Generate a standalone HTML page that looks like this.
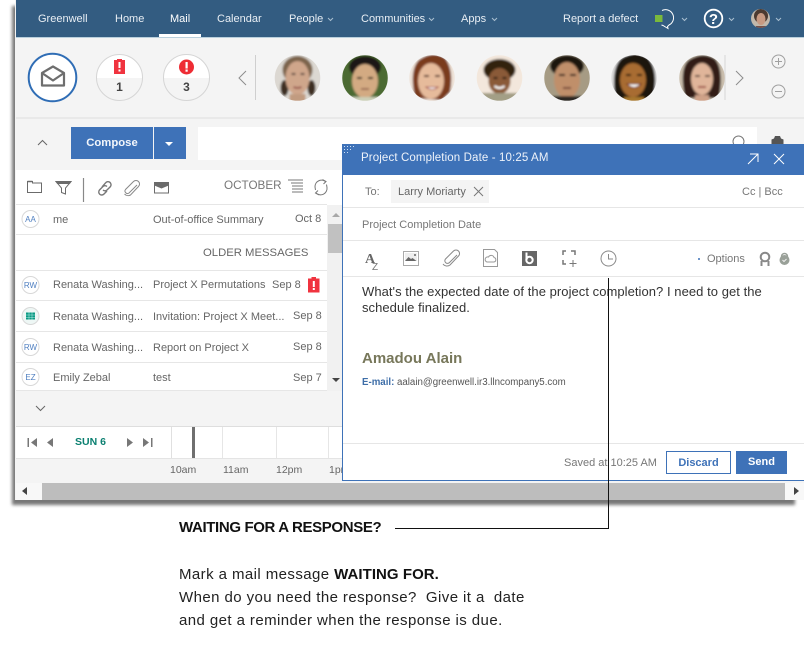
<!DOCTYPE html>
<html><head><meta charset="utf-8">
<style>
html,body{margin:0;padding:0;background:#fff;}
body{width:804px;height:666px;position:relative;overflow:hidden;font-family:"Liberation Sans",sans-serif;}
.a{position:absolute;white-space:nowrap;}
.n{color:#e8eef4;font-size:11px;top:12px;line-height:14px;}
.r{font-size:11px;color:#666;line-height:14px;}
.l{position:absolute;height:1px;background:#e6e6e6;}
svg{position:absolute;overflow:visible;}
.b{font-family:"Liberation Sans",sans-serif;font-size:15px;color:#222;line-height:20px;letter-spacing:.42px;}
.b b{letter-spacing:.05px;}
</style></head><body>

<!-- window shadow -->
<div class="a" style="left:12px;top:6px;width:783px;height:499px;background:#777;filter:blur(1.5px)"></div>
<div class="a" style="left:15px;top:0;width:789px;height:500px;background:#f4f4f4"></div>

<!-- nav -->
<div class="a" style="left:16px;top:0;width:788px;height:37px;background:#335c81"></div>
<div class="a" style="left:16px;top:37px;width:788px;height:1px;background:#b9cfdc"></div>
<div class="a" style="left:159px;top:34px;width:42px;height:3px;background:#fff"></div>
<span class="a n" style="left:38px">Greenwell</span>
<span class="a n" style="left:115px">Home</span>
<span class="a n" style="left:170px;color:#fff">Mail</span>
<span class="a n" style="left:217px">Calendar</span>
<span class="a n" style="left:289px">People</span>
<span class="a n" style="left:361px">Communities</span>
<span class="a n" style="left:461px">Apps</span>
<span class="a n" style="left:563px">Report a defect</span>
<svg style="left:0;top:0" width="804" height="40" fill="none" stroke="#a9bfd0" stroke-width="1">
<path d="M328 18l2.500 2.500 2.500-2.500M429 18l2.500 2.500 2.500-2.500M492 18l2.500 2.500 2.500-2.500M682 18l2.500 2.500 2.500-2.500M729 18l2.500 2.500 2.500-2.500M776 18l2.500 2.500 2.500-2.500"/>
</svg>
<svg style="left:654px;top:8px" width="24" height="22" fill="none">
<path d="M8 2.500a8 8 0 1 1 7 14.500l-1.500 1.500.5 2-2.500-1.500-2.500-1.500-1.500-.5" stroke="#fff" stroke-width="1"/>
<rect x="1" y="7" width="7.500" height="7" fill="#7ab93c"/>
</svg>
<svg style="left:703px;top:8px" width="22" height="22"><circle cx="10.500" cy="10.500" r="8.800" fill="none" stroke="#fff" stroke-width="1.800"/><text x="10.500" y="16" text-anchor="middle" font-family="Liberation Sans" font-weight="bold" font-size="15" fill="#fff">?</text></svg>
<svg style="left:751px;top:9px" width="20" height="20"><defs><clipPath id="c0"><circle cx="9.500" cy="9.500" r="9.500"/></clipPath></defs><g clip-path="url(#c0)"><rect width="20" height="20" fill="#c2b8ab"/><ellipse cx="10" cy="7" rx="7" ry="7" fill="#4c3a30"/><ellipse cx="10" cy="10" rx="4.500" ry="6" fill="#c89a82"/><rect x="5" y="17" width="10" height="3" fill="#74504a"/></g></svg>

<!-- summary icons -->
<svg style="left:27px;top:52px" width="52" height="52" fill="none"><circle cx="25.500" cy="25.500" r="23.800" fill="#fff" stroke="#2f6db5" stroke-width="2"/>
<path d="M15 21l11-6.500L37 21v12.500H15z M15 21l11 7.500 11-7.500" stroke="#6e6e6e" stroke-width="2.200" stroke-linejoin="round"/></svg>
<svg style="left:96px;top:54px" width="48" height="48"><defs><clipPath id="c1"><circle cx="23.500" cy="23.500" r="23"/></clipPath></defs><circle cx="23.500" cy="23.500" r="23" fill="#f4f4f4"/><rect width="48" height="24" y="0" fill="#fff" clip-path="url(#c1)"/><circle cx="23.500" cy="23.500" r="23" fill="none" stroke="#d5d5d5"/>
<rect x="18" y="6" width="11" height="14" fill="#f0333f"/><rect x="21" y="5" width="5" height="2" fill="#f0333f"/><rect x="22.500" y="8" width="2" height="6" fill="#fff"/><rect x="22.500" y="15.500" width="2" height="2" fill="#fff"/></svg>
<svg style="left:163px;top:54px" width="48" height="48"><circle cx="23.500" cy="23.500" r="23" fill="#f4f4f4"/><rect width="48" height="24" y="0" fill="#fff" clip-path="url(#c1)"/><circle cx="23.500" cy="23.500" r="23" fill="none" stroke="#d5d5d5"/>
<circle cx="23.500" cy="13" r="7.500" fill="#ee2c34"/><rect x="22.500" y="8" width="2.200" height="6.500" fill="#fff"/><rect x="22.500" y="15.500" width="2.200" height="2.200" fill="#fff"/></svg>
<span class="a" style="left:96px;top:80px;width:47px;text-align:center;font-size:12px;font-weight:bold;color:#444;line-height:14px">1</span>
<span class="a" style="left:163px;top:80px;width:47px;text-align:center;font-size:12px;font-weight:bold;color:#444;line-height:14px">3</span>

<svg style="left:0;top:40px" width="804" height="70" fill="none" stroke="#8c8c8c" stroke-width="1">
<path d="M246 31l-7 7 7 7M736 31l7 7-7 7"/>
<path d="M255.500 15v45" stroke="#cfcfcf"/><path d="M725 15v45" stroke="#e0e0e0" stroke-width="1.500"/>
<circle cx="778.500" cy="21.500" r="6.500" stroke="#a0a0a0"/><path d="M775 21.500h7M778.500 18v7" stroke="#a0a0a0"/>
<circle cx="778.500" cy="51.500" r="6.500" stroke="#a0a0a0"/><path d="M775 51.500h7" stroke="#a0a0a0"/>
</svg>

<!-- Avatars -->
<svg style="left:0;top:0" width="804" height="120">
<defs>
<filter id="bl"><feGaussianBlur stdDeviation="1"/></filter>
<clipPath id="av"><circle cx="0" cy="0" r="22.800"/></clipPath>
</defs>
<g transform="translate(297.500 78)"><g clip-path="url(#av)"><g filter="url(#bl)"><rect x="-24" y="-24" width="48" height="48" fill="#dcd8d2"/><ellipse cx="0" cy="-8" rx="15" ry="14" fill="#7b634c"/><ellipse cx="-13" cy="10" rx="4" ry="8" fill="#3c2d22"/><ellipse cx="14" cy="10" rx="4" ry="8" fill="#3c2d22"/><ellipse cx="0" cy="0" rx="12" ry="17" fill="#cfa68b"/><path d="M-6-4h4M3-4h4" stroke="#5a4a3d" stroke-width="2"/><path d="M-4 9q4 2 8 0" stroke="#9b5a50" stroke-width="2" fill="none"/><rect x="-8" y="16" width="16" height="8" fill="#c19b80"/></g></g></g>
<g transform="translate(365 78)"><g clip-path="url(#av)"><g filter="url(#bl)"><rect x="-24" y="-24" width="48" height="48" fill="#4c6a32"/><ellipse cx="0" cy="-11" rx="16" ry="11" fill="#1d1712"/><ellipse cx="0" cy="3" rx="13" ry="17" fill="#d3aa82"/><path d="M-8 0h5M3 0h5" stroke="#2c2018" stroke-width="2"/><path d="M-4 11h8" stroke="#8d5a48" stroke-width="1.500"/><rect x="-24" y="19" width="48" height="5" fill="#ccd0b8"/></g></g></g>
<g transform="translate(432 78)"><g clip-path="url(#av)"><g filter="url(#bl)"><rect x="-24" y="-24" width="48" height="48" fill="#efe4da"/><path d="M-17 20q-6-28 4-38q14-10 26-2q9 12 5 34l-8 8z" fill="#7a3a1e"/><ellipse cx="-1" cy="3" rx="13" ry="18" fill="#e6bb9b"/><path d="M-8-2h5M3-2h5" stroke="#5c3a2a" stroke-width="2"/><path d="M-6 9q6 5 12 0z" fill="#fff" stroke="#a6504a"/></g></g></g>
<g transform="translate(499.500 78)"><g clip-path="url(#av)"><g filter="url(#bl)"><rect x="-24" y="-24" width="48" height="48" fill="#f3e7dc"/><ellipse cx="0" cy="-8" rx="16" ry="11" fill="#33220f"/><ellipse cx="0" cy="3" rx="11" ry="13" fill="#8a5a38"/><path d="M-6 0h4M3 0h4" stroke="#22150b" stroke-width="2"/><path d="M-5 8q5 4 10 0" stroke="#fff" stroke-width="2" fill="none"/><rect x="-18" y="15" width="36" height="9" fill="#a39f86"/></g></g></g>
<g transform="translate(567 78)"><g clip-path="url(#av)"><g filter="url(#bl)"><rect x="-24" y="-24" width="48" height="48" fill="#a69b84"/><ellipse cx="0" cy="-12" rx="17" ry="11" fill="#1c1611"/><ellipse cx="0" cy="2" rx="13" ry="18" fill="#c08f6b"/><path d="M-8-3h6M3-3h6" stroke="#2c1e14" stroke-width="2"/><path d="M-4 10h8" stroke="#7a4a3a" stroke-width="2"/><rect x="-24" y="18" width="48" height="6" fill="#2c2520"/></g></g></g>
<g transform="translate(634 78)"><g clip-path="url(#av)"><g filter="url(#bl)"><rect x="-24" y="-24" width="48" height="48" fill="#ddd"/><path d="M-18 24q-6-34 6-44q14-8 26 0q12 14 4 44z" fill="#1c120d"/><ellipse cx="-1" cy="2" rx="13" ry="17" fill="#a86c30"/><path d="M-8-3h5M3-3h5" stroke="#1c120d" stroke-width="2"/><path d="M-7 6q7 7 14 0z" fill="#fff" stroke="#702a1e"/><rect x="-10" y="19" width="20" height="5" fill="#a8782e"/></g></g></g>
<g transform="translate(702 78)"><g clip-path="url(#av)"><g filter="url(#bl)"><rect x="-24" y="-24" width="48" height="48" fill="#cbbfae"/><path d="M-17 20q-6-30 4-38q14-9 26-1q9 10 4 39z" fill="#331e17"/><ellipse cx="0" cy="1" rx="11" ry="16" fill="#e0b59a"/><path d="M-7-2h5M3-2h5" stroke="#33221a" stroke-width="1.500"/><path d="M-4 9h8" stroke="#a0564c" stroke-width="2"/><rect x="-7" y="17" width="14" height="7" fill="#cfa288"/></g></g></g>
</svg>

<div class="l" style="left:16px;top:117px;width:788px;height:2px;background:#e9e9e9"></div>

<!-- toolbar -->
<svg style="left:36px;top:138px" width="14" height="9" fill="none" stroke="#666" stroke-width="1"><path d="M2 7l4.500-4.500L11 7"/></svg>
<div class="a" style="left:71px;top:127px;width:82px;height:32px;background:#3e72b8;color:#f2f6fb;font-size:11.300px;font-weight:bold;line-height:32px;text-align:center">Compose</div>
<div class="a" style="left:154px;top:127px;width:32px;height:32px;background:#3e72b8"></div>
<div class="a" style="left:165px;top:142px;border:4.500px solid transparent;border-top:4.500px solid #fff;border-bottom:0"></div>
<div class="a" style="left:198px;top:127px;width:559px;height:33px;background:#fff"></div>
<svg style="left:732px;top:134px" width="56" height="12" fill="none"><circle cx="6.500" cy="7.500" r="5.500" stroke="#777" stroke-width="1"/><path d="M43 2h5l1 2.500 2.500 1v5h-12v-5l2.500-1z" fill="#555"/></svg>

<!-- list -->
<div class="a" style="left:16px;top:170px;width:328px;height:221px;background:#fff"></div>
<svg style="left:0;top:170px" width="345" height="35" fill="none" stroke="#6b6b6b" stroke-width="1">
<path d="M27.500 11.500h5v1.500h9v9.500h-14z"/>
<path d="M27.500 11.500h5" stroke-width="1.500"/>
<path d="M56 11.500h15l-5.500 6.500v6l-4-1.500v-4.500z"/>
<path d="M56 11.500h15l-1.500 2h-12z" fill="#6b6b6b"/>
<path d="M83.500 8v24" stroke="#888" stroke-width="1.200"/>
<path d="M102 17l3.500-4a3 3 0 0 1 5 3.500l-3.500 3.500a3 3 0 0 1-4 0M107 16.500a3 3 0 0 0-4 0l-3.500 3.500a3 3 0 0 0 4.500 4l3-3" stroke="#777" stroke-width="1.400"/>
<path d="M137 15l-8 8a2.500 2.500 0 0 1-3.500-3.500l8-8a3.500 3.500 0 0 1 5 5l-8 8.500a5 5 0 0 1-6-1" stroke="#888"/>
<path d="M154.500 12.500h14v10.500h-14z"/><path d="M154.500 12.500h14v2.500l-7 3-7-3z" fill="#6b6b6b"/>
<path d="M288 10h15M291 13h12M292 16h11M292 19h11M292 22h11" stroke="#777"/>
<path d="M326 12a6.500 6.500 0 0 0-11 5l.5 3M316 23a6.500 6.500 0 0 0 11-5.500l-.5-3" stroke="#777"/><path d="M322.500 9.500l3.500 2-2.500 2.500M319 25l-3.500-2 2.500-2.500" stroke="#777"/>
</svg>
<span class="a r" style="left:224px;top:179px;font-size:11.700px;color:#777">OCTOBER</span>
<div class="l" style="left:16px;top:204px;width:311px"></div>
<div class="l" style="left:16px;top:234px;width:311px"></div>
<div class="l" style="left:16px;top:270px;width:311px"></div>
<div class="l" style="left:16px;top:300px;width:311px"></div>
<div class="l" style="left:16px;top:331px;width:311px"></div>
<div class="l" style="left:16px;top:362px;width:311px"></div>
<div class="l" style="left:16px;top:390px;width:311px"></div>

<svg style="left:0;top:200px" width="60" height="200">
<g fill="#fff" stroke="#d8d8d8"><circle cx="30.500" cy="19" r="8.500"/><circle cx="30.500" cy="85" r="8.500"/><circle cx="30.500" cy="116" r="8.500" fill="#eef7f5"/><circle cx="30.500" cy="147" r="8.500"/><circle cx="30.500" cy="177" r="8.500"/></g>
<g font-family="Liberation Sans" font-size="8" fill="#4f7fc0" text-anchor="middle"><text x="30.500" y="22">AA</text><text x="30.500" y="88">RW</text><text x="30.500" y="150">RW</text><text x="30.500" y="180">EZ</text></g>
<rect x="26" y="112.500" width="9" height="7" fill="#0c9a84"/><path d="M26 115h9M26 117.300h9M29 112.500v7M32 112.500v7" stroke="#dff" stroke-width=".4"/>
</svg>

<span class="a r" style="left:53px;top:213px">me</span>
<span class="a r" style="left:153px;top:213px">Out-of-office Summary</span>
<span class="a r" style="left:295px;top:212px">Oct 8</span>
<span class="a r" style="left:203px;top:246px;font-size:11.300px">OLDER MESSAGES</span>
<span class="a r" style="left:53px;top:278px">Renata Washing...</span>
<span class="a r" style="left:153px;top:278px">Project X Permutations</span>
<span class="a r" style="left:272px;top:278px">Sep 8</span>
<svg style="left:307px;top:277px" width="14" height="16"><rect x="1" y="1.500" width="11.500" height="14" fill="#f0333f"/><rect x="4.500" y="0" width="4.500" height="2" fill="#f0333f"/><rect x="5.800" y="4" width="2" height="6" fill="#fff"/><rect x="5.800" y="11" width="2" height="2" fill="#fff"/></svg>
<span class="a r" style="left:53px;top:310px">Renata Washing...</span>
<span class="a r" style="left:153px;top:310px">Invitation: Project X Meet...</span>
<span class="a r" style="left:293px;top:309px">Sep 8</span>
<span class="a r" style="left:53px;top:341px">Renata Washing...</span>
<span class="a r" style="left:153px;top:341px">Report on Project X</span>
<span class="a r" style="left:293px;top:340px">Sep 8</span>
<span class="a r" style="left:53px;top:371px">Emily Zebal</span>
<span class="a r" style="left:153px;top:371px">test</span>
<span class="a r" style="left:293px;top:371px">Sep 7</span>

<!-- vertical scrollbar -->
<div class="a" style="left:327px;top:205px;width:17px;height:186px;background:#f1f1f1"></div>
<div class="a" style="left:328px;top:224px;width:16px;height:29px;background:#c1c1c1"></div>
<div class="a" style="left:332px;top:213px;border:4px solid transparent;border-bottom:4px solid #a8a8a8;border-top:0"></div>
<div class="a" style="left:332px;top:378px;border:4px solid transparent;border-top:4px solid #444;border-bottom:0"></div>

<!-- collapse + timeline -->
<svg style="left:34px;top:404px" width="14" height="9" fill="none" stroke="#666"><path d="M2 2l4.500 4.500L11 2"/></svg>
<div class="a" style="left:16px;top:426px;width:328px;height:32px;background:#fff"></div>
<div class="l" style="left:16px;top:426px;width:328px;background:#dedede"></div>
<div class="l" style="left:16px;top:458px;width:328px;background:#e4e4e4"></div>
<div class="a" style="left:171px;top:427px;width:1px;height:31px;background:#e0e0e0"></div>
<div class="a" style="left:192px;top:427px;width:3px;height:31px;background:#6f6f6f"></div>
<div class="a" style="left:222px;top:427px;width:1px;height:31px;background:#e6e6e6"></div>
<div class="a" style="left:276px;top:427px;width:1px;height:31px;background:#e6e6e6"></div>
<div class="a" style="left:328px;top:427px;width:1px;height:31px;background:#e6e6e6"></div>
<svg style="left:26px;top:436px" width="130" height="14" fill="#777">
<path d="M1.500 2h1.500v9h-1.500zM11 2v9l-6-4.500zM27 2v9l-6-4.500zM101 2v9l6-4.500zM117 2v9l6-4.500zM125 2h1.500v9h-1.500z"/>
</svg>
<span class="a" style="left:75px;top:435px;font-size:10.500px;font-weight:bold;color:#0a7f70;line-height:14px">SUN 6</span>
<span class="a r" style="left:170px;top:463px;font-size:10.500px">10am</span>
<span class="a r" style="left:223px;top:463px;font-size:10.500px">11am</span>
<span class="a r" style="left:276px;top:463px;font-size:10.500px">12pm</span>
<span class="a r" style="left:329px;top:463px;font-size:10.500px">1pm</span>

<!-- horizontal scrollbar -->
<div class="a" style="left:16px;top:483px;width:788px;height:17px;background:#f8f8f8"></div>
<div class="a" style="left:42px;top:483px;width:743px;height:17px;background:#bdbdbd"></div>
<div class="a" style="left:22px;top:487px;border:4.500px solid transparent;border-right:5px solid #444;border-left:0"></div>
<div class="a" style="left:794px;top:487px;border:4.500px solid transparent;border-left:5px solid #444;border-right:0"></div>

<!-- compose window -->
<div class="a" style="left:342px;top:144px;height:335px;background:#fff;border:1px solid #3e72b8;border-right:0;width:462px"></div>
<div class="a" style="left:342px;top:144px;width:462px;height:31px;background:#3e72b8"></div>
<span class="a" style="left:361px;top:151px;font-size:11.500px;letter-spacing:.12px;color:#eef3fa;line-height:14px">Project Completion Date - 10:25 AM</span>
<svg style="left:344px;top:146px" width="12" height="8" fill="#cfe0f4"><path d="M0 0h1v1H0zM3 0h1v1H3zM6 0h1v1H6zM9 0h1v1H9zM0 3h1v1H0zM3 3h1v1H3zM6 3h1v1H6zM0 6h1v1H0zM3 6h1v1H3z"/></svg>
<svg style="left:745px;top:152px" width="42" height="14" fill="none" stroke="#fff" stroke-width="1"><path d="M3 12l10-10M5 2h8v8M29 2l10 10M39 2L29 12"/></svg>

<span class="a r" style="left:365px;top:185px;color:#777">To:</span>
<div class="a" style="left:391px;top:180px;width:98px;height:23px;background:#f4f4f4"></div>
<span class="a r" style="left:398px;top:185px;color:#666">Larry Moriarty</span>
<svg style="left:473px;top:186px" width="12" height="12" fill="none" stroke="#777"><path d="M1 1l9 9M10 1L1 10"/></svg>
<span class="a r" style="left:742px;top:185px;color:#777">Cc | Bcc</span>
<div class="l" style="left:343px;top:207px;width:461px"></div>
<span class="a r" style="left:362px;top:218px;color:#777;font-size:11px">Project Completion Date</span>
<div class="l" style="left:343px;top:240px;width:461px"></div>

<!-- compose toolbar -->
<svg style="left:360px;top:246px" width="262" height="28" fill="none" stroke="#777" stroke-width="1">
<text x="5" y="17" font-family="Liberation Serif" font-weight="bold" font-size="14" fill="#666" stroke="none">A</text>
<text x="12" y="24" font-family="Liberation Sans" font-size="10" fill="#777" stroke="none">Z</text>
<rect x="43.500" y="5.500" width="15" height="14" stroke="#aaa"/>
<rect x="45" y="7" width="12" height="8" fill="#eee" stroke="none"/>
<path d="M45 15l3.500-4 2.500 2 1.500-1 4 3z" fill="#666" stroke="none"/><circle cx="55" cy="9" r="1" fill="#666" stroke="none"/>
<path d="M97 9l-7.500 7.500a2.500 2.500 0 0 1-4-3.500l8-8a3.500 3.500 0 0 1 5 5l-8.500 9a5 5 0 0 1-7-1" stroke="#888"/>
<path d="M123.500 3.500h11l3 3v14h-14z" stroke="#999"/>
<path d="M127 16h7a2.300 2.300 0 0 0 0-4.500 3 3 0 0 0-5.500-.5 2.500 2.500 0 0 0-1.500 5z" stroke="#999"/>
<rect x="162" y="5" width="15" height="15" fill="#666" stroke="none"/>
<circle cx="169.500" cy="14" r="3.200" stroke="#fff" stroke-width="2"/><path d="M166.500 6.500v7.500" stroke="#fff" stroke-width="2"/>
<path d="M203 9V5h3M211 5h4v4M203 14v4h3" stroke="#777" stroke-width="1.500"/><path d="M213 14v7M209.500 17.500h7" stroke="#777"/>
<circle cx="248.500" cy="12.500" r="7.500" stroke="#888"/><path d="M248.500 8v5h4.500" stroke="#888"/>
</svg>
<div class="a" style="left:698px;top:258px;width:2px;height:2px;border-radius:1px;background:#3e72b8"></div>
<span class="a r" style="left:707px;top:252px;color:#777">Options</span>
<svg style="left:758px;top:251px" width="34" height="16" fill="none"><circle cx="7" cy="6" r="4.300" stroke="#888" stroke-width="2"/><path d="M3.500 10v5M10.500 10v5" stroke="#888" stroke-width="2"/><circle cx="26.500" cy="9" r="5" fill="#99a098"/><path d="M23.500 5.500a3 3 0 0 1 6 0" stroke="#99a098" stroke-width="1.500"/><path d="M24.500 9l1.500 1.500 2.500-2.500" stroke="#eee"/></svg>
<div class="l" style="left:343px;top:276px;width:461px"></div>

<!-- body -->
<span class="a" style="left:362px;top:284px;font-size:13px;letter-spacing:.05px;color:#333;line-height:16px">What's the expected date of the project completion? I need to get the<br>schedule finalized.</span>
<span class="a" style="left:362px;top:350px;font-size:15px;font-weight:bold;color:#77775a;line-height:18px">Amadou Alain</span>
<span class="a" style="left:362px;top:376px;font-size:9.700px;color:#555;line-height:13px"><b style="color:#3e6ea8">E-mail:</b> aalain@greenwell.ir3.llncompany5.com</span>
<div class="l" style="left:343px;top:443px;width:461px"></div>
<span class="a r" style="left:564px;top:456px;color:#777;font-size:11px">Saved at 10:25 AM</span>
<div class="a" style="left:666px;top:451px;width:63px;height:21px;border:1px solid #3e72b8;background:#fff;color:#3e72b8;font-size:11px;font-weight:bold;line-height:22px;text-align:center">Discard</div>
<div class="a" style="left:736px;top:451px;width:51px;height:23px;background:#3e72b8;color:#fff;font-size:11px;font-weight:bold;line-height:23px;text-align:center">Send</div>

<!-- callout -->
<div class="a" style="left:608px;top:278px;width:1px;height:251px;background:#111"></div>
<div class="a" style="left:395px;top:528px;width:214px;height:1px;background:#111"></div>

<span class="a b" style="left:179px;top:518px;font-weight:bold;color:#111;letter-spacing:-.36px">WAITING FOR A RESPONSE?</span>
<span class="a b" style="left:179px;top:565px">Mark a mail message <b style="color:#111">WAITING FOR.</b></span>
<span class="a b" style="left:179px;top:588px">When do you need the response?&nbsp; Give it a&nbsp; date</span>
<span class="a b" style="left:179px;top:611px">and get a reminder when the response is due.</span>

</body></html>
